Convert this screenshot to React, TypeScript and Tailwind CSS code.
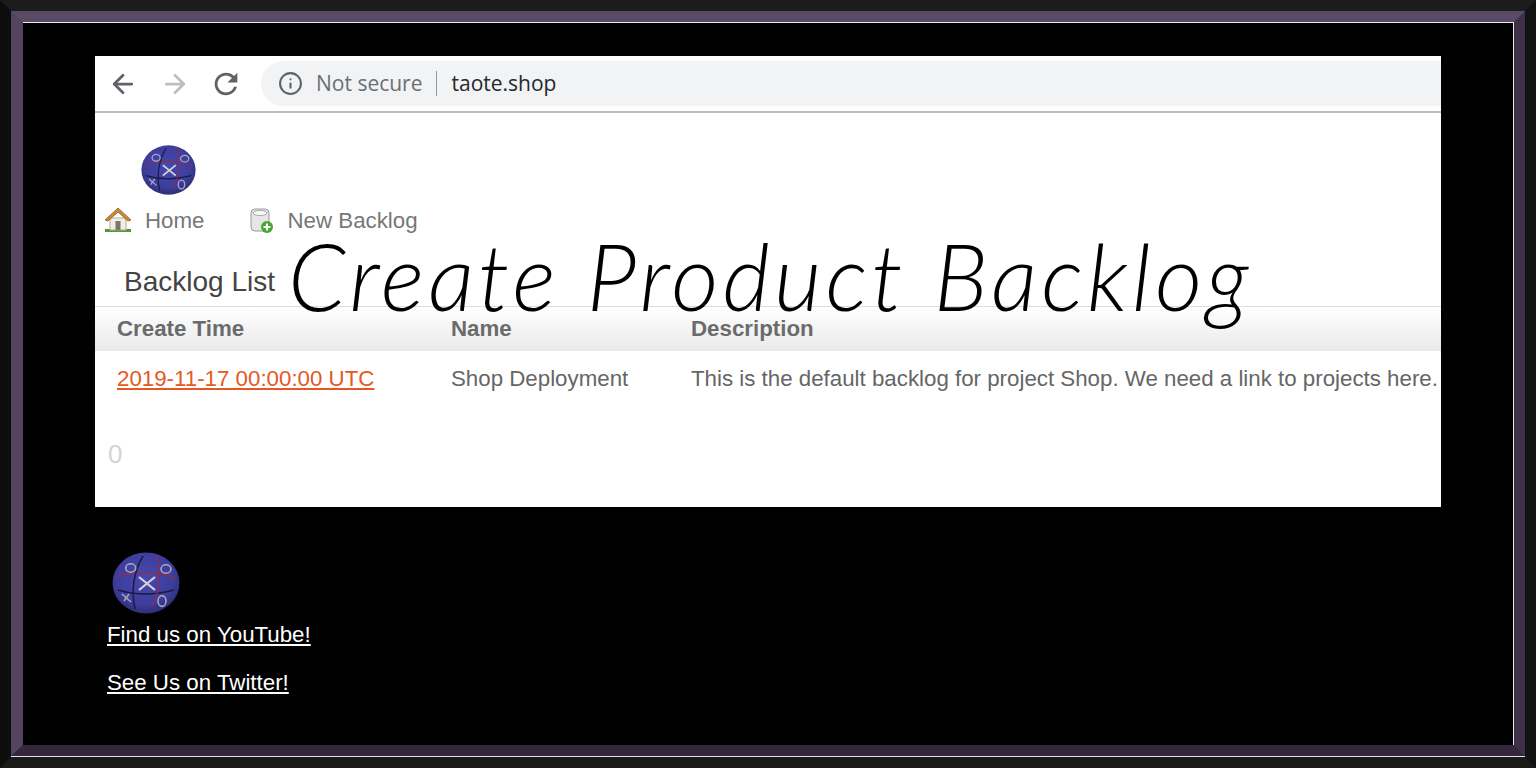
import { ArrowLeft, ArrowRight, Info } from "lucide-react";

const sans = "font-['Liberation_Sans',Arial,sans-serif]";

function Logo({ className }: { className: string }) {
  return (
    <svg className={className} viewBox="0 0 68 62" aria-hidden="true">
      <defs>
        <radialGradient id="ball" cx="48%" cy="42%" r="62%">
          <stop offset="0%" stopColor="#4648ac" />
          <stop offset="70%" stopColor="#3d3d9c" />
          <stop offset="100%" stopColor="#2a2a6c" />
        </radialGradient>
      </defs>
      <ellipse cx="34" cy="31" rx="33.5" ry="30.5" fill="url(#ball)" />
      <path d="M4 25 Q33 15 64 26" fill="none" stroke="#8c2f4c" strokeWidth="1.3" />
      <path d="M6 38 Q33 46 62 38" fill="none" stroke="#1b1b45" strokeWidth="1.5" />
      <path d="M31 4 Q17 28 23 57" fill="none" stroke="#1b1b45" strokeWidth="1.5" />
      <path d="M44 4 Q52 28 40 54" fill="none" stroke="#8c2f4c" strokeWidth="1.3" />
      <path d="M27 25 L43 38 M43 25 L27 38" stroke="#d8d4dc" strokeWidth="2.2" />
      <path d="M10 42 L19 50 M17 42 L12 49" stroke="#aaa7b8" strokeWidth="1.6" />
      <ellipse cx="18.700" cy="16" rx="5" ry="4.200" fill="none" stroke="#aaa7c4" strokeWidth="1.600" />
      <ellipse cx="54" cy="17" rx="5" ry="4.200" fill="none" stroke="#aaa7c4" strokeWidth="1.600" />
      <ellipse cx="50" cy="49" rx="4" ry="5.400" fill="none" stroke="#aaa7c4" strokeWidth="1.600" />
    </svg>
  );
}

function HomeIcon() {
  return (
    <svg className="h-[26px] w-[28px]" viewBox="0 0 28 26" aria-hidden="true">
      <path d="M1 21 H27 V24 H1 Z" fill="#4f9a3a" />
      <path d="M6 10 H22 V22 H6 Z" fill="#f3eee2" stroke="#b9a98c" />
      <path d="M11.500 13 H16.500 V22 H11.500 Z" fill="#777" />
      <path d="M1 12 L14 0 L27 12 L24 13 L14 4 L4 13 Z" fill="#c98a3c" stroke="#8f5a1e" strokeWidth="0.800" />
    </svg>
  );
}

function NewBacklogIcon() {
  return (
    <svg className="h-[26px] w-[26px]" viewBox="0 0 26 26" aria-hidden="true">
      <rect x="2" y="1" width="18" height="22" rx="4" fill="#e6e6e6" stroke="#9a9a9a" />
      <ellipse cx="11" cy="5" rx="7" ry="2.600" fill="#f7f7f7" stroke="#aaa" />
      <circle cx="18" cy="19" r="6" fill="#46a832" />
      <path d="M18 15.500 V22.500 M14.500 19 H21.500" stroke="#fff" strokeWidth="2" />
    </svg>
  );
}

function ReloadIcon() {
  return (
    <svg className="size-[34px]" viewBox="0 0 24 24" aria-hidden="true">
      <path
        d="M17.650 6.350A7.958 7.958 0 0 0 12 4c-4.420 0-7.990 3.580-7.990 8s3.570 8 7.990 8c3.730 0 6.840-2.550 7.730-6h-2.080A5.990 5.990 0 0 1 12 18c-3.310 0-6-2.690-6-6s2.690-6 6-6c1.660 0 3.140.69 4.220 1.780L13 11h7V4l-2.350 2.350z"
        fill="#5f6368"
      />
    </svg>
  );
}

function BrowserBar() {
  return (
    <div className="flex h-[57px] items-center border-b-2 border-[#bdbdbd] pl-[13px]">
      <ArrowLeft className="size-[30px] text-[#5f6368]" strokeWidth={2.2} />
      <ArrowRight className="ml-[22px] size-[30px] text-[#bcbec1]" strokeWidth={2.2} />
      <div className="ml-[19px]">
        <ReloadIcon />
      </div>
      <div className="ml-[18px] flex h-[45px] flex-1 items-center rounded-l-full bg-[#f1f3f4] pl-[17px] font-['Open_Sans',sans-serif] text-[21px]">
        <Info className="size-[25px] text-[#5f6368]" strokeWidth={2} />
        <span className="ml-[13px] text-[#6b6f74]">Not secure</span>
        <span className="ml-[13px] h-[25px] w-px bg-[#9a9a9a]" />
        <span className="ml-[15px] text-[#26282b]">taote.shop</span>
      </div>
    </div>
  );
}

function BacklogPanel() {
  return (
    <div className={`h-[451px] w-[1346px] shrink-0 overflow-hidden bg-white ${sans}`}>
      <BrowserBar />
      <Logo className="ml-[46px] mt-[31px] h-[52px] w-[55px] blur-[0.7px]" />
      <nav className="mt-[10px] flex h-[30px] items-center pl-[9px] text-[22.3px] text-[#777]">
        <HomeIcon />
        <span className="ml-[13px]">Home</span>
        <span className="ml-[45px]">
          <NewBacklogIcon />
        </span>
        <span className="ml-[12px]">New Backlog</span>
      </nav>
      <h1 className="mt-[24px] h-[46px] pl-[29px] text-[28px] leading-[44px] font-normal text-[#444]">
        Backlog List
      </h1>
      <div className="grid h-[45px] grid-cols-[334px_240px_1fr] items-center border-t border-[#dcdcdc] bg-gradient-to-b from-white to-[#e9e9e9] pl-[22px] text-[22.3px] font-bold text-[#6b6b6b]">
        <span>Create Time</span>
        <span>Name</span>
        <span>Description</span>
      </div>
      <div className="grid h-[55px] grid-cols-[334px_240px_1fr] items-center pl-[22px] text-[22.3px] whitespace-nowrap text-[#666]">
        <a className="text-[#e4591f] underline">2019-11-17 00:00:00 UTC</a>
        <span>Shop Deployment</span>
        <span>This is the default backlog for project Shop. We need a link to projects here.</span>
      </div>
      <p className="mt-[29px] pl-[13px] text-[26px] text-[#d4d4d4]">0</p>
    </div>
  );
}

export default function App() {
  return (
    <div className="relative h-[768px] w-[1536px] overflow-hidden border-[11px] border-t-[#1c1c1c] border-r-[#121212] border-b-[#1a1a1a] border-l-[#0d0d0d]">
      <div className="h-[746px] w-[1514px] border-b border-[#e4e4e4]">
        <div className="h-[745px] border-t-[11px] border-r-[11px] border-b-[11px] border-l-[12px] border-t-[#5b4a66] border-r-[#3f3048] border-b-[#34263c] border-l-[#544460]">
          <div className={`flex h-full flex-col border-t border-r border-[#e8e8e8] bg-black pt-[33px] pl-[72px] ${sans}`}>
            <div className="mb-[45px]">
              <BacklogPanel />
            </div>
            <div className="pl-[12px] text-[22.3px] text-white">
              <Logo className="ml-[5px] h-[62px] w-[68px] blur-[0.4px]" />
              <a className="mt-[8px] block leading-[26px] underline">Find us on YouTube!</a>
              <a className="mt-[22px] block leading-[26px] underline">See Us on Twitter!</a>
            </div>
          </div>
        </div>
      </div>
      <div className="absolute top-[215px] left-[277px] font-['Lato',sans-serif] text-[92px] leading-[100px] font-light tracking-[4px] whitespace-nowrap text-black italic">
        Create Product Backlog
      </div>
    </div>
  );
}
